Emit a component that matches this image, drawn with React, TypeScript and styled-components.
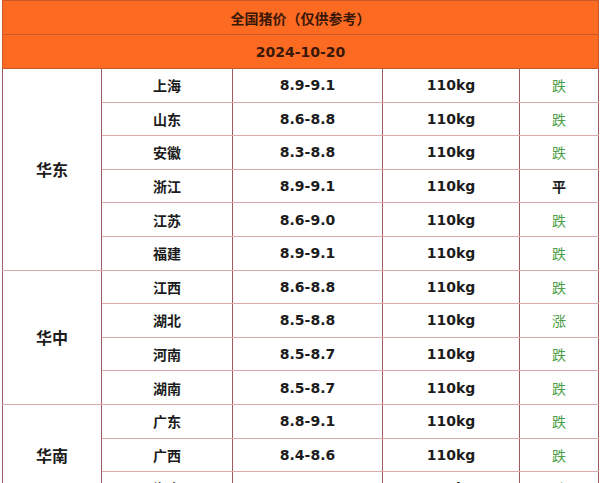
import styled, { createGlobalStyle } from "styled-components";

type Row = {
  province: string;
  price: string;
  weight: string;
  trend: "跌" | "涨" | "平";
};

type Region = {
  name: string;
  rows: Row[];
};

const regions: Region[] = [
  {
    name: "华东",
    rows: [
      { province: "上海", price: "8.9-9.1", weight: "110kg", trend: "跌" },
      { province: "山东", price: "8.6-8.8", weight: "110kg", trend: "跌" },
      { province: "安徽", price: "8.3-8.8", weight: "110kg", trend: "跌" },
      { province: "浙江", price: "8.9-9.1", weight: "110kg", trend: "平" },
      { province: "江苏", price: "8.6-9.0", weight: "110kg", trend: "跌" },
      { province: "福建", price: "8.9-9.1", weight: "110kg", trend: "跌" },
    ],
  },
  {
    name: "华中",
    rows: [
      { province: "江西", price: "8.6-8.8", weight: "110kg", trend: "跌" },
      { province: "湖北", price: "8.5-8.8", weight: "110kg", trend: "涨" },
      { province: "河南", price: "8.5-8.7", weight: "110kg", trend: "跌" },
      { province: "湖南", price: "8.5-8.7", weight: "110kg", trend: "跌" },
    ],
  },
  {
    name: "华南",
    rows: [
      { province: "广东", price: "8.8-9.1", weight: "110kg", trend: "跌" },
      { province: "广西", price: "8.4-8.6", weight: "110kg", trend: "跌" },
      { province: "海南", price: "8.5-8.7", weight: "110kg", trend: "跌" },
    ],
  },
];

const columnWidths = [99, 131, 150, 137, 79];

const GlobalStyle = createGlobalStyle`
  html, body {
    margin: 0;
    padding: 0;
    background: #ffffff;
    height: 483px;
    overflow: hidden;
  }
`;

const Page = styled.div`
  padding: 0 2px;
`;

const Table = styled.table`
  width: 596px;
  border-collapse: collapse;
  table-layout: fixed;
  font-family: "DejaVu Sans", "Noto Sans CJK SC", sans-serif;
  font-weight: bold;
  font-size: 14px;
  color: #1c1c1c;
`;

const Col = styled.col<{ $w: number }>`
  width: ${(p) => p.$w}px;
`;

const HeadCell = styled.th`
  height: 33px;
  padding: 0;
  background: #fd6a22;
  color: #3a1808;
  font-size: 14px;
  font-weight: bold;
  text-align: center;
  border: 1px solid #c9592a;
`;

const Cell = styled.td<{ $green?: boolean; $big?: boolean }>`
  height: 32.6px;
  padding: 0;
  text-align: center;
  border-top: 1px solid #dcaaaa;
  border-bottom: 1px solid #dcaaaa;
  border-left: 1px solid #9e5a60;
  border-right: 1px solid #9e5a60;
  font-size: ${(p) => (p.$big ? "16px" : "14px")};
  color: ${(p) => (p.$green ? "#4a9e46" : "#1c1c1c")};
  font-weight: ${(p) => (p.$green ? "normal" : "bold")};
`;

export default function App() {
  return (
    <Page>
      <GlobalStyle />
      <Table>
        <colgroup>
          {columnWidths.map((w, i) => (
            <Col key={i} $w={w} />
          ))}
        </colgroup>
        <thead>
          <tr>
            <HeadCell colSpan={5}>全国猪价（仅供参考）</HeadCell>
          </tr>
          <tr>
            <HeadCell colSpan={5}>2024-10-20</HeadCell>
          </tr>
        </thead>
        <tbody>
          {regions.map((region) =>
            region.rows.map((row, i) => (
              <tr key={row.province}>
                {i === 0 && (
                  <Cell $big rowSpan={region.rows.length}>
                    {region.name}
                  </Cell>
                )}
                <Cell>{row.province}</Cell>
                <Cell>{row.price}</Cell>
                <Cell>{row.weight}</Cell>
                <Cell $green={row.trend !== "平"}>{row.trend}</Cell>
              </tr>
            ))
          )}
        </tbody>
      </Table>
    </Page>
  );
}
